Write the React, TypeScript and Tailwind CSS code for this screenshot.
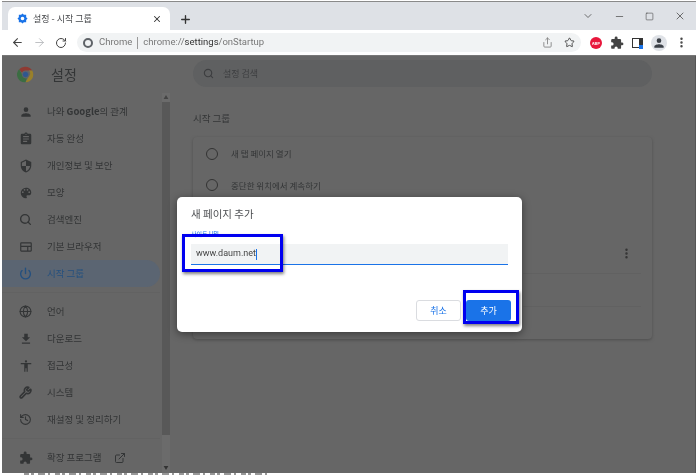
import { ArrowLeft, ArrowRight, ChevronDown, Minus, Plus, RotateCw, Search, Share, Square, Star, X, MoreVertical, ExternalLink, Globe, Wrench, History, Power } from "lucide-react";
import type { ReactNode } from "react";

const path = (d: string) => (
  <svg width="14" height="14" viewBox="0 0 24 24" fill="currentColor"><path d={d} /></svg>
);

const icons = {
  person: path("M12 12a4 4 0 1 0 0-8 4 4 0 0 0 0 8zm0 2c-2.7 0-8 1.3-8 4v2h16v-2c0-2.7-5.3-4-8-4z"),
  clipboard: path("M19 3h-4.2C14.4 1.8 13.3 1 12 1s-2.4.8-2.8 2H5a2 2 0 0 0-2 2v14a2 2 0 0 0 2 2h14a2 2 0 0 0 2-2V5a2 2 0 0 0-2-2zm-7 0a1 1 0 1 1 0 2 1 1 0 0 1 0-2zm2 14H7v-2h7v2zm3-4H7v-2h10v2zm0-4H7V7h10v2z"),
  shield: path("M12 1 3 5v6c0 5.500 3.800 10.700 9 12 5.200-1.300 9-6.500 9-12V5l-9-4zm0 11h7c-.5 4.100-3.300 7.800-7 8.900V12H5V6.300l7-3.100V12z"),
  palette: path("M12 3a9 9 0 0 0 0 18c.8 0 1.500-.7 1.500-1.500 0-.4-.1-.7-.4-1-.2-.3-.4-.6-.4-1 0-.8.700-1.500 1.500-1.500H16a5 5 0 0 0 5-5c0-4.400-4-8-9-8zM6.500 12a1.500 1.500 0 1 1 0-3 1.500 1.500 0 0 1 0 3zm3-4a1.500 1.500 0 1 1 0-3 1.500 1.500 0 0 1 0 3zm5 0a1.500 1.500 0 1 1 0-3 1.500 1.500 0 0 1 0 3zm3 4a1.500 1.500 0 1 1 0-3 1.500 1.500 0 0 1 0 3z"),
  browser: path("M20 4H4a2 2 0 0 0-2 2v12a2 2 0 0 0 2 2h16a2 2 0 0 0 2-2V6a2 2 0 0 0-2-2zM4 18v-6h10v6H4zm16 0h-4v-6h4v6zm0-8H4V6h16v4z"),
  download: path("M19 9h-4V3H9v6H5l7 7 7-7zM5 18v2h14v-2H5z"),
  access: path("M12 2a2 2 0 1 1 0 4 2 2 0 0 1 0-4zm9 7h-6v13h-2v-6h-2v6H9V9H3V7h18v2z"),
  puzzle: path("M20.500 11H19V7a2 2 0 0 0-2-2h-4V3.500a2.500 2.500 0 0 0-5 0V5H4a2 2 0 0 0-2 2v3.800h1.500a2.700 2.700 0 0 1 0 5.400H2V20a2 2 0 0 0 2 2h3.800v-1.500a2.700 2.700 0 0 1 5.400 0V22H17a2 2 0 0 0 2-2v-4h1.500a2.500 2.500 0 0 0 0-5z"),
};

function NavRow({ icon, label, active }: { icon: ReactNode; label: ReactNode; active?: boolean }) {
  return (
    <div className={`flex h-[27px] items-center rounded-r-full pl-[17px] ${active ? "bg-[#5b6572] text-[#24507f]" : "text-[#333536]"}`}>
      <span className="flex w-[28px] shrink-0">{icon}</span>
      <span className="text-[9.5px]">{label}</span>
    </div>
  );
}

function ChromeLogo({ size }: { size: number }) {
  return (
    <svg width={size} height={size} viewBox="0 0 24 24">
      <path d="M12 1a11 11 0 0 1 9.500 5.500H12a5.500 5.500 0 0 0-5 3.200L3 4.600A11 11 0 0 1 12 1z" fill="#8f3a32" />
      <path d="M21.500 6.500A11 11 0 0 1 12 23l4.800-8.200a5.500 5.500 0 0 0 0-8.300z" fill="#99802a" />
      <path d="M12 23A11 11 0 0 1 3 4.600l4.800 8.300a5.500 5.500 0 0 0 6 4.300z" fill="#3b6d42" />
      <circle cx="12" cy="12" r="4.500" fill="#2f5790" stroke="#666" strokeWidth="1.200" />
    </svg>
  );
}

export default function App() {
  return (
    <div className="relative h-[476px] w-[700px] overflow-hidden bg-white font-['Noto_Sans_CJK_KR','Noto_Sans',sans-serif]">
      <div className="mt-px ml-[2px] w-[694px] border-t border-[#8a8a8a] blur-[0.4px]">
        {/* 탭 영역 */}
        <div className="flex h-[28px] items-end bg-[#dee1e6] pl-[6px]">
          <div className="flex h-[23px] w-[162px] items-center rounded-t-[7px] bg-white pl-[9px] pr-[8px] text-[#45474a]">
            <svg width="11" height="11" viewBox="0 0 24 24" fill="#1a73e8"><path d="M12 1l3 3h5v5l3 3-3 3v5h-5l-3 3-3-3H4v-5l-3-3 3-3V4h5l3-3zm0 7a4 4 0 1 0 0 8 4 4 0 0 0 0-8z" /></svg>
            <span className="ml-[5px] flex-1 text-[9px]">설정 - 시작 그룹</span>
            <X size={10} strokeWidth={2.5} className="text-[#333]" />
          </div>
          <Plus size={13} strokeWidth={2.5} className="mb-[4px] ml-[9px] text-[#333]" />
          <div className="mb-[8px] ml-auto flex items-center gap-[20px] pr-[10px] text-[#444]">
            <ChevronDown size={12} strokeWidth={1.5} />
            <Minus size={11} strokeWidth={1.5} />
            <Square size={9} strokeWidth={1.5} />
            <X size={12} strokeWidth={1.5} />
          </div>
        </div>
        {/* 주소창 */}
        <div className="flex h-[26px] items-center border-b border-[#777] bg-white pl-[9px] text-[#444]">
          <ArrowLeft size={13} strokeWidth={2} />
          <ArrowRight size={13} strokeWidth={1.5} className="ml-[9px] text-[#b0b3b6]" />
          <RotateCw size={12} strokeWidth={2} className="ml-[9px]" />
          <div className="ml-[10px] flex h-[19px] w-[504px] items-center rounded-full bg-[#f1f3f4] pl-[6px] pr-[6px]">
            <span className="h-[10px] w-[10px] rounded-full border-[2.5px] border-[#5f6368]" />
            <span className="ml-[6px] font-['Roboto',sans-serif] text-[9.5px] text-[#777]">Chrome</span>
            <span className="mx-[5px] h-[12px] w-px bg-[#999]" />
            <span className="font-['Roboto',sans-serif] text-[9.5px] text-[#777]">
              chrome://<span className="text-[#333]">settings</span>/onStartup
            </span>
            <Share size={11} className="ml-auto text-[#888]" />
            <Star size={11} strokeWidth={2} className="ml-[11px] text-[#444]" />
          </div>
          <span className="ml-[9px] flex h-[12px] w-[12px] items-center justify-center rounded-full bg-[#e8173c] text-[4px] font-bold text-white">ABP</span>
          <span className="ml-[8px] text-[#444]">{icons.puzzle}</span>
          <span className="relative ml-[8px] h-[10px] w-[11px] border-[1.5px] border-r-[4px] border-[#333]">
            <span className="absolute -right-[4px] -bottom-[2px] h-[4px] w-[4px] bg-[#1a73e8]" />
          </span>
          <span className="ml-[8px] flex h-[16px] w-[16px] items-center justify-center rounded-full bg-[#dfe2e7] text-[#3a3f46]">{icons.person}</span>
          <MoreVertical size={13} strokeWidth={2.5} className="ml-[8px] text-[#444]" />
        </div>

        {/* 설정 페이지 (어두운 오버레이 상태) */}
        <div className="flex h-[417px] border-r border-[#555] bg-[#666]">
          <aside className="flex w-[168px] shrink-0">
            <div className="w-[158px] shrink-0">
              <div className="flex h-[36px] items-center pl-[15px] text-[#333536]">
                <ChromeLogo size={17} />
                <span className="ml-[17px] text-[14px]">설정</span>
              </div>
              <div className="pt-[6px]">
                <NavRow icon={icons.person} label={<>나와 <b>Google</b>의 관계</>} />
                <NavRow icon={icons.clipboard} label="자동 완성" />
                <NavRow icon={icons.shield} label="개인정보 및 보안" />
                <NavRow icon={icons.palette} label="모양" />
                <NavRow icon={<Search size={13} strokeWidth={2.5} />} label="검색엔진" />
                <NavRow icon={icons.browser} label="기본 브라우저" />
                <NavRow active icon={<Power size={13} strokeWidth={2.5} />} label="시작 그룹" />
              </div>
              <div className="mt-[5px] mb-[5px] h-px bg-[#626262]" />
              <NavRow icon={<Globe size={13} strokeWidth={2} />} label="언어" />
              <NavRow icon={icons.download} label="다운로드" />
              <NavRow icon={icons.access} label="접근성" />
              <NavRow icon={<Wrench size={13} strokeWidth={3} />} label="시스템" />
              <NavRow icon={<History size={13} strokeWidth={2} />} label="재설정 및 정리하기" />
              <div className="mt-[5px] mb-[5px] h-px bg-[#626262]" />
              <div className="flex h-[27px] items-center pl-[17px] text-[#333536]">
                <span className="flex w-[28px] shrink-0">{icons.puzzle}</span>
                <span className="text-[9.5px]">확장 프로그램</span>
                <ExternalLink size={12} strokeWidth={2} className="ml-[12px]" />
              </div>
            </div>
            {/* 스크롤바 */}
            <div className="mt-[37px] ml-[2px] flex w-[8px] flex-col items-center bg-[#6b6b6b]">
              <div className="h-[8px] text-[5px] leading-[8px] text-[#444]">▲</div>
              <div className="mt-[1px] h-[333px] w-full bg-[#585858]" />
              <div className="mt-auto mb-[2px] h-[8px] text-[5px] leading-[8px] text-[#333]">▼</div>
            </div>
          </aside>

          <main className="min-w-0 flex-1 pt-[4px] pl-[23px]">
            <div className="flex h-[27px] w-[459px] items-center rounded-full bg-[#5f6061] pl-[10px] text-[#3d3e40]">
              <Search size={11} strokeWidth={2.5} />
              <span className="ml-[9px] text-[9px]">설정 검색</span>
            </div>
            <h2 className="mt-[24px] text-[9.5px] leading-[14px] text-[#333536]">시작 그룹</h2>
            <section className="mt-[12px] h-[202px] w-[459px] rounded-[4px] bg-[#666] shadow-[0_1px_3px_#4e4e4e]">
              <div className="flex h-[32px] items-center pt-[1px] pl-[13px] text-[#333536]">
                <span className="h-[12px] w-[12px] rounded-full border-[1.5px] border-[#333]" />
                <span className="ml-[13px] text-[8.5px]">새 탭 페이지 열기</span>
              </div>
              <div className="flex h-[32px] items-center pl-[13px] text-[#333536]">
                <span className="h-[12px] w-[12px] rounded-full border-[1.5px] border-[#333]" />
                <span className="ml-[13px] text-[8.5px]">중단한 위치에서 계속하기</span>
              </div>
              <div className="flex h-[59px] items-end justify-end pr-[19px] text-[#333]">
                <MoreVertical size={13} strokeWidth={2.5} />
              </div>
              <div className="mt-[13px] ml-[330px] h-[34px] w-[118px] border-y border-[#616161]" />
            </section>
          </main>
        </div>
      </div>

      {/* 하단에 잘려 보이는 글자 윗부분 */}
      <svg className="absolute top-[473px] left-[24px] blur-[0.4px]" width="246" height="3">
        <line x1="0" y1="1" x2="246" y2="1" stroke="#777" strokeWidth="1.500" strokeDasharray="5 2 3 4 7 3 2 5" />
      </svg>

      {/* 새 페이지 추가 대화상자 */}
      <div className="absolute top-[197px] left-[177px] h-[135px] w-[345px] rounded-[5px] bg-white px-[14px] pt-[10px] shadow-[0_2px_8px_rgba(0,0,0,0.45)] blur-[0.4px]">
        <div className="text-[10.5px] leading-[14px] text-[#4d4f52]">새 페이지 추가</div>
        <div className="mt-[9px] text-[6px] leading-[8px] text-[#1a73e8]">사이트 URL</div>
        <div className="mt-[6px] flex h-[21px] w-[317px] items-center border-b border-b-[#1a73e8] bg-[#f1f3f4] pl-[5px] font-['Roboto',sans-serif] text-[9px] text-[#444]">
          www.daum.net<span className="h-[11px] w-px bg-[#1a73e8]" />
        </div>
        <div className="mt-[35px] -mr-[3px] flex justify-end gap-[5px] text-[9px]">
          <button className="flex h-[21px] w-[45px] items-center justify-center rounded-[3px] border border-[#dadce0] bg-white text-[#1a73e8]">취소</button>
          <button className="flex h-[21px] w-[45px] items-center justify-center rounded-[3px] bg-[#1a73e8] text-white">추가</button>
        </div>
      </div>

      {/* 강조 표시 박스 */}
      <div className="absolute top-[234px] left-[182px] h-[38px] w-[101px] border-[3px] border-[#0000f0] shadow-[1px_2px_3px_rgba(0,0,0,0.5)]" />
      <div className="absolute top-[290px] left-[463px] h-[34px] w-[56px] border-[3px] border-[#0000f0] shadow-[1px_2px_3px_rgba(0,0,0,0.5)]" />
    </div>
  );
}
